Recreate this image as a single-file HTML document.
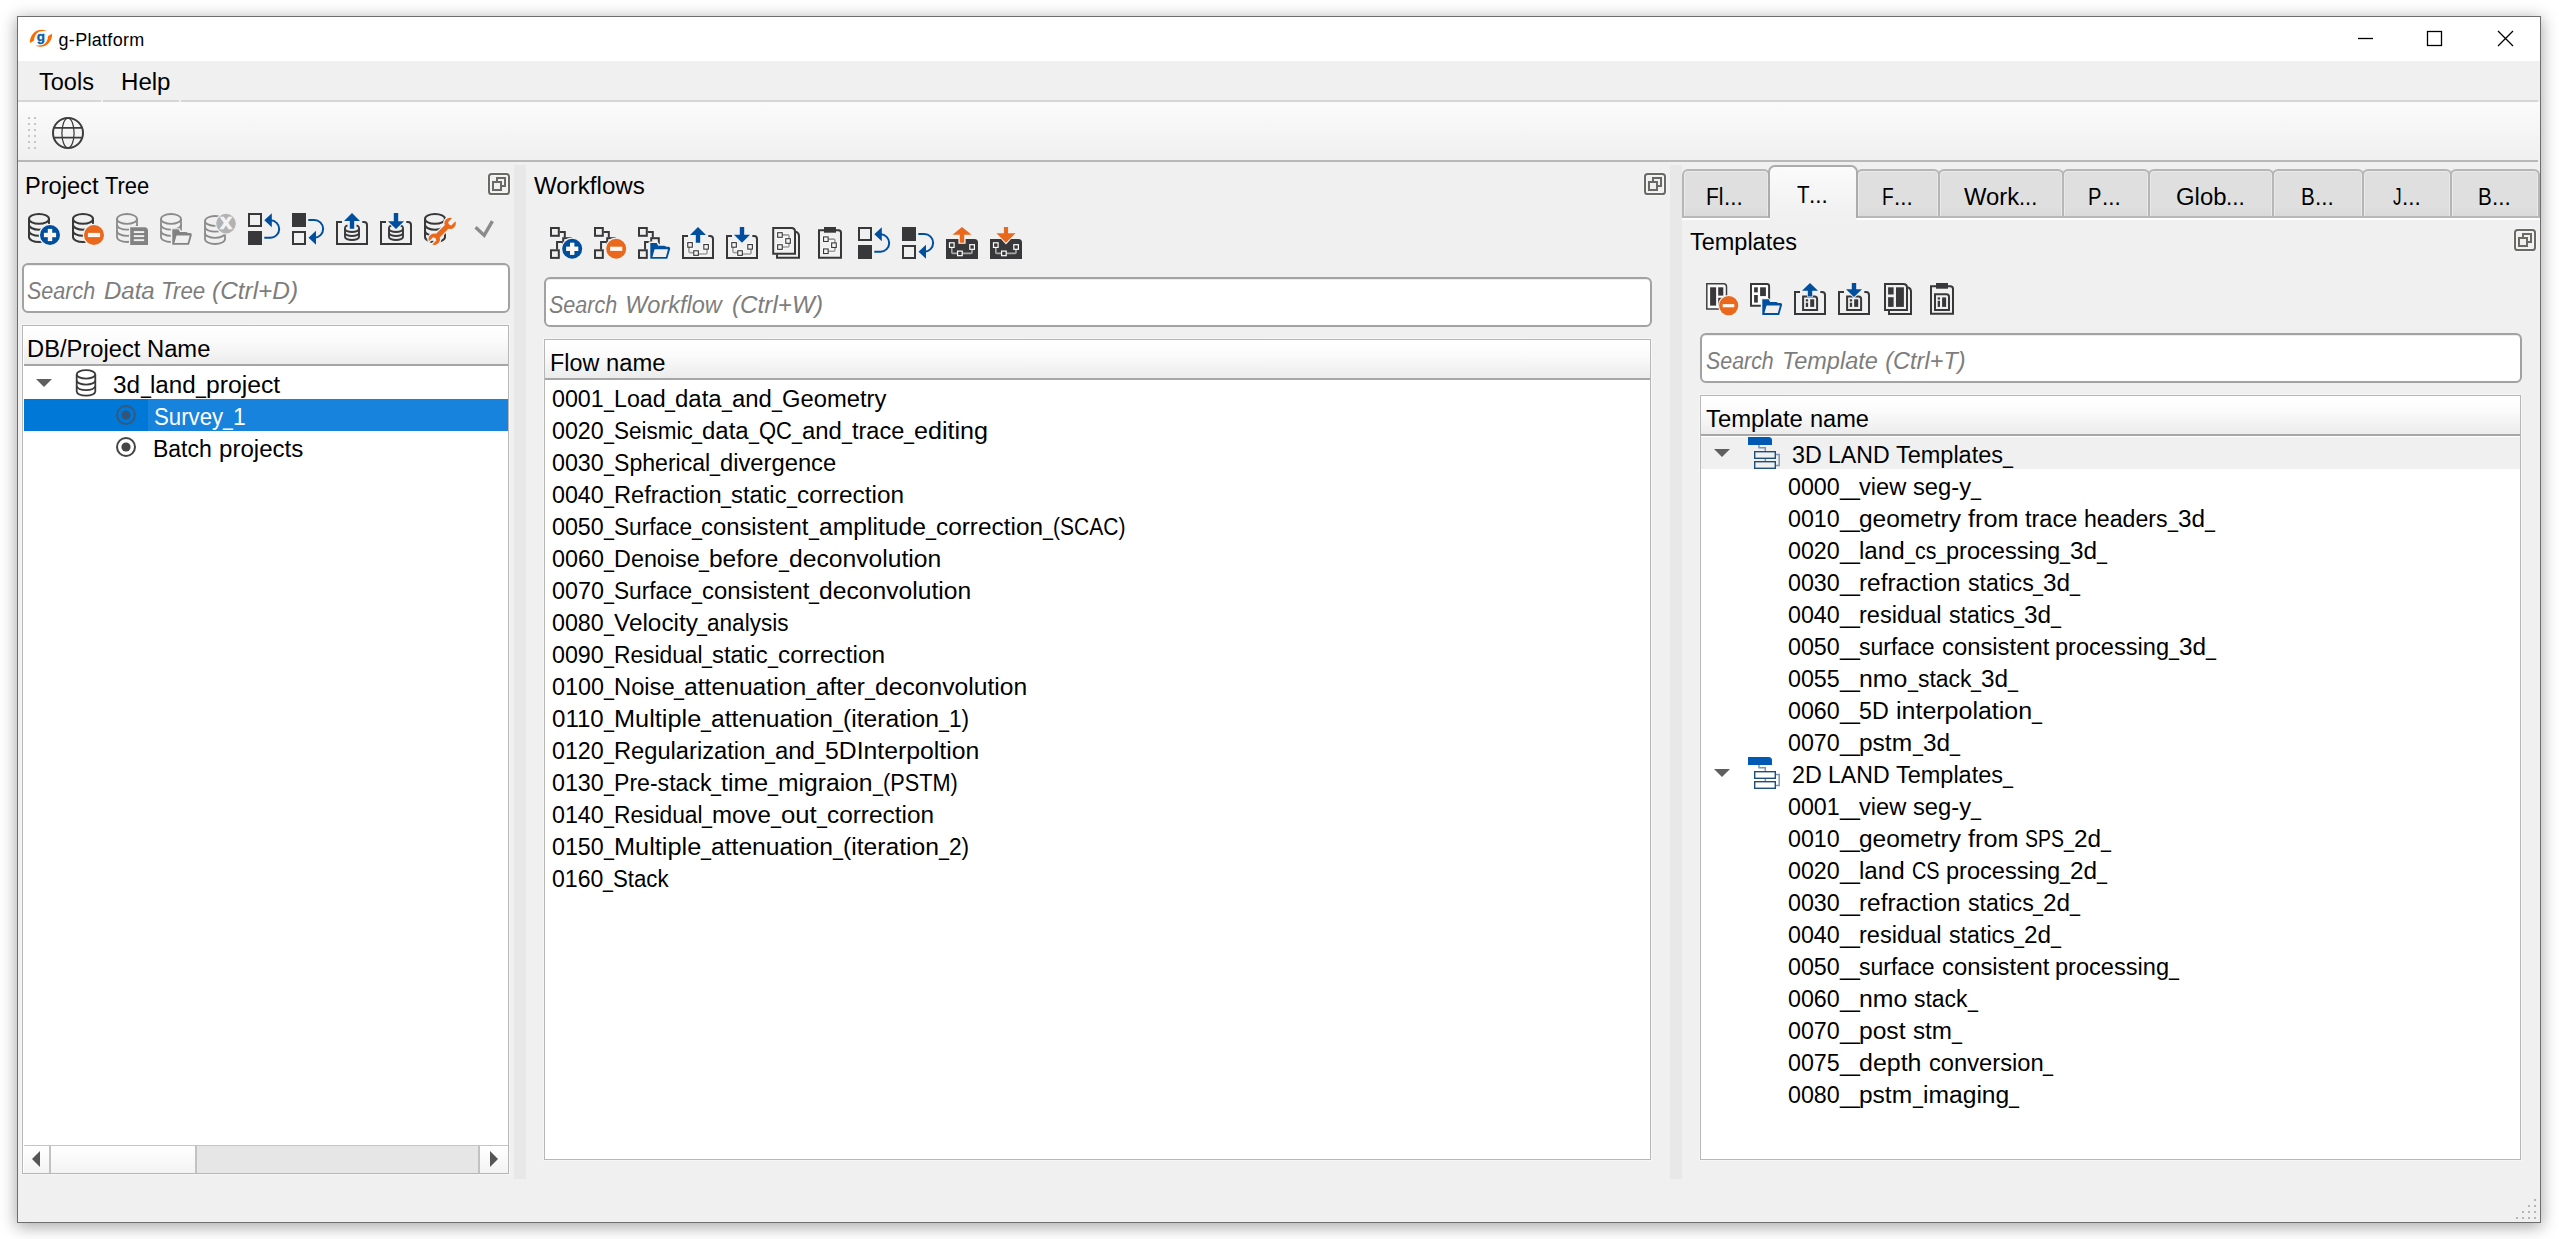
<!DOCTYPE html>
<html><head><meta charset="utf-8"><title>g-Platform</title>
<style>
html,body{margin:0;padding:0;background:#fff;}
body{width:2559px;height:1239px;position:relative;overflow:hidden;font-family:"Liberation Sans",sans-serif;}
div{position:absolute;box-sizing:border-box;}
svg.ic{position:absolute;overflow:visible;}
.t{font:23.5px/32px "Liberation Sans",sans-serif;letter-spacing:-0.2px;white-space:pre;color:#000;}
.t span,.ph span{position:absolute;top:0;transform-origin:0 0;letter-spacing:0;}
.ph{font:italic 23.5px/32px "Liberation Sans",sans-serif;letter-spacing:-0.1px;white-space:pre;color:#7d7d7d;}
.ttl{font:18px/32px "Liberation Sans",sans-serif;letter-spacing:0.15px;white-space:pre;color:#000;}
.search{background:#fff;border:2px solid #a2a2a2;border-radius:6px;box-shadow:inset 0 1px 0 #ededed;}
.view{background:#fff;border:1px solid #b7b7b7;box-shadow:0 0 0 1px #f6f6f6;}
.hdr{background:linear-gradient(#ffffff,#fbfbfb 40%,#ececec);}
.hline{background:#a6a6a6;}
.tab{background:linear-gradient(#dfdfdf,#dfdfdf 80%,#d9d9d9);border:2px solid #b6b6b6;border-bottom:none;border-radius:6px 6px 0 0;box-shadow:inset 1px 1px 0 #e9e9e9,inset -1px 0 0 #e9e9e9;}
</style></head>
<body>
<div style="left:17px;top:16px;width:2524px;height:1207px;background:#f0f0f0;border:1px solid #6e6e6e;box-shadow:0 3px 15px 1px rgba(0,0,0,0.34);"></div>
<div style="left:18px;top:17px;width:2522px;height:44px;background:#fff;"></div>
<svg class="ic" style="left:29px;top:28px" width="24" height="20" viewBox="0 0 24 20"><path d="M0.9 14.9C0.5 8 6 1.5 13 1.8C15 1.9 16.8 2.5 17.8 3.3C15 2.8 12 2.9 10 3.8C7 5.2 5.2 8.5 4.9 12.7Z" fill="#ff6a00"/><path d="M23.1 5.7C23.5 12.6 18 19.1 11 18.8C9 18.7 7.2 18.1 6.2 17.3C9 17.8 12 17.7 14 16.8C17 15.4 18.8 12.1 19.1 7.9Z" fill="#ff6a00"/><text x="11.8" y="12.5" text-anchor="middle" font-family="Liberation Sans,sans-serif" font-weight="bold" font-size="13.5" fill="#0a5ea8" stroke="#0a5ea8" stroke-width="0.35">g</text></svg>
<div class="ttl" style="left:58.56px;top:24.0px;letter-spacing:0.300px;">g-Platform</div>
<svg class="ic" style="left:2340px;top:17px" width="200" height="44" viewBox="0 0 200 44"><g stroke="#000" stroke-width="1.3" fill="none"><path d="M18 21.5H33"/><rect x="87.5" y="14.5" width="14" height="14"/><path d="M158 14L173 29M173 14L158 29"/></g></svg>
<div class="t" style="left:38.60px;top:66.0px;"><span style="left:0.00px;transform:scaleX(1.0011)">Tools</span></div>
<div class="t" style="left:121.24px;top:66.0px;"><span style="left:0.00px;transform:scaleX(1.0242)">Help</span></div>
<div style="left:18px;top:100px;width:2520px;height:2px;background:#d6d6d6;"></div>
<div style="left:101px;top:100px;width:2px;height:2px;background:#f0f0f0;"></div>
<div style="left:179px;top:100px;width:2px;height:2px;background:#f0f0f0;"></div>
<div style="left:18px;top:102px;width:2522px;height:58px;background:linear-gradient(#fbfbfb,#f0f0f0);"></div>
<div style="left:18px;top:160px;width:2520px;height:2px;background:#b8b8b8;"></div>
<div style="left:28px;top:117px;width:2px;height:2px;background:#c6c6c6;"></div>
<div style="left:34px;top:117px;width:2px;height:2px;background:#c6c6c6;"></div>
<div style="left:28px;top:123px;width:2px;height:2px;background:#c6c6c6;"></div>
<div style="left:34px;top:123px;width:2px;height:2px;background:#c6c6c6;"></div>
<div style="left:28px;top:129px;width:2px;height:2px;background:#c6c6c6;"></div>
<div style="left:34px;top:129px;width:2px;height:2px;background:#c6c6c6;"></div>
<div style="left:28px;top:135px;width:2px;height:2px;background:#c6c6c6;"></div>
<div style="left:34px;top:135px;width:2px;height:2px;background:#c6c6c6;"></div>
<div style="left:28px;top:141px;width:2px;height:2px;background:#c6c6c6;"></div>
<div style="left:34px;top:141px;width:2px;height:2px;background:#c6c6c6;"></div>
<div style="left:28px;top:147px;width:2px;height:2px;background:#c6c6c6;"></div>
<div style="left:34px;top:147px;width:2px;height:2px;background:#c6c6c6;"></div>
<svg class="ic" style="left:52px;top:117px" width="32" height="32" viewBox="0 0 32 32"><g fill="none" stroke="#3d3d3d"><circle cx="16" cy="16" r="15" stroke-width="2"/><ellipse cx="16" cy="16" rx="6.1" ry="15" stroke-width="1.25"/><path d="M2.2 10.8H29.8M2.2 20.7H29.8" stroke-width="1.8"/></g></svg>
<div style="left:514px;top:165px;width:12px;height:1014px;background:#e8e8e8;"></div>
<div style="left:1670px;top:165px;width:12px;height:1014px;background:#e8e8e8;"></div>
<div class="t" aria-label="Project Tree" style="left:25.24px;top:170.0px;"><span style="left:0.00px;transform:scaleX(1.0040)">Project </span><span style="left:80.00px;transform:scaleX(0.9327)">Tree</span></div>
<svg class="ic" style="left:488px;top:173px" width="22" height="22" viewBox="0 0 22 22"><rect x="1" y="1" width="20" height="20" rx="2.4" fill="none" stroke="#f8f8f8" stroke-width="3.6"/><rect x="1" y="1" width="20" height="20" rx="2.6" fill="none" stroke="#6b6963" stroke-width="2"/><g fill="#6b6963" shape-rendering="crispEdges"><rect x="8" y="4" width="10" height="2"/><rect x="16" y="4" width="2" height="10"/><rect x="8" y="4" width="2" height="4"/><rect x="14" y="12" width="4" height="2"/><rect x="4" y="8" width="10" height="2"/><rect x="4" y="16" width="10" height="2"/><rect x="4" y="8" width="2" height="10"/><rect x="12" y="8" width="2" height="10"/></g></svg>
<svg class="ic" style="left:28px;top:213px" width="32" height="32" viewBox="0 0 32 32"><g fill="none" stroke="#38383a" stroke-width="2"><ellipse cx="11" cy="5.9" rx="10" ry="4.9"/><path d="M1 5.9V24.1A10 4.9 0 0 0 21 24.1V5.9"/><path d="M1 11.8A10 4.9 0 0 0 21 11.8M1 17.9A10 4.9 0 0 0 21 17.9"/></g><circle cx="22" cy="22" r="11.2" fill="#f0f0f0"/><circle cx="22" cy="22" r="10" fill="#004e9e"/><rect x="15.9" y="19.8" width="12.2" height="4.4" fill="#fdf7f1"/><rect x="19.8" y="15.9" width="4.4" height="12.2" fill="#fdf7f1"/></svg>
<svg class="ic" style="left:72px;top:213px" width="32" height="32" viewBox="0 0 32 32"><g fill="none" stroke="#38383a" stroke-width="2"><ellipse cx="11" cy="5.9" rx="10" ry="4.9"/><path d="M1 5.9V24.1A10 4.9 0 0 0 21 24.1V5.9"/><path d="M1 11.8A10 4.9 0 0 0 21 11.8M1 17.9A10 4.9 0 0 0 21 17.9"/></g><circle cx="22" cy="22" r="11.2" fill="#f0f0f0"/><circle cx="22" cy="22" r="10" fill="#e9681c"/><rect x="15.9" y="19.9" width="12.2" height="4.2" fill="#fdf7f1"/></svg>
<svg class="ic" style="left:116px;top:213px" width="32" height="32" viewBox="0 0 32 32"><g fill="none" stroke="#8b8b8b" stroke-width="1.8"><ellipse cx="11" cy="5.9" rx="10" ry="4.9"/><path d="M1 5.9V24.1A10 4.9 0 0 0 21 24.1V5.9"/><path d="M1 11.8A10 4.9 0 0 0 21 11.8M1 17.9A10 4.9 0 0 0 21 17.9"/></g><rect x="13" y="13" width="20" height="20" fill="#f0f0f0"/><path d="M14.2 14.3H28.5Q32 14.3 32 18V32H14.2Z" fill="#828282"/><g fill="#f0f0f0"><rect x="17.8" y="18.1" width="10.4" height="1.9"/><rect x="17.8" y="22.15" width="10.4" height="1.9"/><rect x="17.8" y="26.2" width="10.4" height="1.9"/></g></svg>
<svg class="ic" style="left:160px;top:213px" width="32" height="32" viewBox="0 0 32 32"><g fill="none" stroke="#8b8b8b" stroke-width="1.8"><ellipse cx="11" cy="5.9" rx="10" ry="4.9"/><path d="M1 5.9V24.1A10 4.9 0 0 0 21 24.1V5.9"/><path d="M1 11.8A10 4.9 0 0 0 21 11.8M1 17.9A10 4.9 0 0 0 21 17.9"/></g><path d="M10.8 33V15.2H19L21 17.5H30V20H33V33Z" fill="#f0f0f0"/><path d="M12.3 31.8V16.3H18.6L20.0 18.9H25.7Q27.5 18.9 27.7 19.9H30.3Q32.3 20.1 31.7 22.5L29.0 31.8Z" fill="#828282"/><path d="M16.5 22.4H29.7L27.7 30.0H14.4Z" fill="#f0f0f0"/></svg>
<svg class="ic" style="left:204px;top:213px" width="32" height="32" viewBox="0 0 32 32"><g fill="none" stroke="#8b8b8b" stroke-width="1.8"><ellipse cx="11" cy="7.9" rx="10" ry="4.9"/><path d="M1 7.9V26.1A10 4.9 0 0 0 21 26.1V7.9"/><path d="M1 13.8A10 4.9 0 0 0 21 13.8M1 19.9A10 4.9 0 0 0 21 19.9"/></g><circle cx="22" cy="10.6" r="10.9" fill="#f0f0f0"/><circle cx="22" cy="10.6" r="9.8" fill="#b2b2b2"/><text x="22" y="16.4" text-anchor="middle" font-family="Liberation Sans,sans-serif" font-weight="bold" font-size="22.5" fill="#f4f4f4" stroke="#f4f4f4" stroke-width="0.5">x</text></svg>
<svg class="ic" style="left:248px;top:213px" width="32" height="32" viewBox="0 0 32 32"><rect x="1" y="1" width="12" height="12" fill="none" stroke="#38383a" stroke-width="2"/><rect x="0" y="18" width="14" height="14" fill="#38383a"/><path d="M16.3 24.7H22.5A8.7 8.7 0 0 0 22.5 7.3" fill="none" stroke="#004e9e" stroke-width="2"/><path d="M16.3 7.3L23.8 0.3V14.3Z" fill="#004e9e"/></svg>
<svg class="ic" style="left:292px;top:213px" width="32" height="32" viewBox="0 0 32 32"><rect x="0" y="0" width="14" height="14" fill="#38383a"/><rect x="1" y="19" width="12" height="12" fill="none" stroke="#38383a" stroke-width="2"/><path d="M16.3 7H22.3A8.85 8.85 0 0 1 22.3 24.7" fill="none" stroke="#004e9e" stroke-width="2"/><path d="M16.5 24.7L24 17.7V31.7Z" fill="#004e9e"/></svg>
<svg class="ic" style="left:336px;top:213px" width="32" height="32" viewBox="0 0 32 32"><path d="M6 9H1V31H31V12Q31 9 28 9H26.3" fill="none" stroke="#38383a" stroke-width="2"/><g fill="none" stroke="#38383a" stroke-width="1.9"><path d="M9 14.2V24A7 3 0 0 0 23 24V14.2"/><path d="M9 16A7 3 0 0 0 23 16M9 20A7 3 0 0 0 23 20"/><path d="M9 14.6A7 3 0 0 1 11.5 12.4M23 14.6A7 3 0 0 0 20.5 12.4"/></g><rect x="12.6" y="9" width="6.8" height="8" fill="#f0f0f0"/><path d="M16 0L24 7.9H18.2V15.7H13.8V7.9H8Z" fill="#004e9e"/></svg>
<svg class="ic" style="left:380px;top:213px" width="32" height="32" viewBox="0 0 32 32"><path d="M6 9H1V31H31V12Q31 9 28 9H26.3" fill="none" stroke="#38383a" stroke-width="2"/><g fill="none" stroke="#38383a" stroke-width="1.9"><path d="M9 14.2V24A7 3 0 0 0 23 24V14.2"/><path d="M9 16A7 3 0 0 0 23 16M9 20A7 3 0 0 0 23 20"/><path d="M9 14.6A7 3 0 0 1 11.5 12.4M23 14.6A7 3 0 0 0 20.5 12.4"/></g><path d="M7 8.5H25L16 17.5Z" fill="#f0f0f0"/><path d="M13.8 0H18.2V8.3H24L16 15.9L8 8.3H13.8Z" fill="#004e9e"/></svg>
<svg class="ic" style="left:424px;top:213px" width="32" height="32" viewBox="0 0 32 32"><g fill="none" stroke="#38383a" stroke-width="2"><ellipse cx="11" cy="5.9" rx="10" ry="4.9"/><path d="M1 5.9V24.1A10 4.9 0 0 0 21 24.1V5.9"/><path d="M1 11.8A10 4.9 0 0 0 21 11.8M1 17.9A10 4.9 0 0 0 21 17.9"/></g><g transform="translate(18.2 18.3) rotate(-45)"><path d="M-6.13 -2.6H6.13A5.7 5.7 0 0 1 16.4 -2.3L10.6 -2.3L9.6 0L10.6 2.3L16.4 2.3A5.7 5.7 0 0 1 6.13 2.6H-6.13A5.7 5.7 0 0 1 -16.4 2.3L-10.6 2.3L-9.6 0L-10.6 -2.3L-16.4 -2.3A5.7 5.7 0 0 1 -6.13 -2.6Z" fill="#f0f0f0" stroke="#f0f0f0" stroke-width="2.6" stroke-linejoin="round"/><path d="M-6.13 -2.6H6.13A5.7 5.7 0 0 1 16.4 -2.3L10.6 -2.3L9.6 0L10.6 2.3L16.4 2.3A5.7 5.7 0 0 1 6.13 2.6H-6.13A5.7 5.7 0 0 1 -16.4 2.3L-10.6 2.3L-9.6 0L-10.6 -2.3L-16.4 -2.3A5.7 5.7 0 0 1 -6.13 -2.6Z" fill="#e9681c"/></g></svg>
<svg class="ic" style="left:468px;top:213px" width="32" height="32" viewBox="0 0 32 32"><path d="M7.6 14.2L16.2 22.4L24.4 8.2" fill="none" stroke="#8b8b8b" stroke-width="3.4"/></svg>
<div class="search" style="left:22px;top:263px;width:488px;height:50px;"></div>
<div class="ph" aria-label="Search Data Tree (Ctrl+D)" style="left:28px;top:275.0px;"><span style="left:-0.55px;transform:scaleX(0.9157)">Search </span><span style="left:76.02px;transform:scaleX(1.0203)">Data </span><span style="left:133.41px;transform:scaleX(0.9486)">Tree </span><span style="left:184.45px;transform:scaleX(1.0390)">(Ctrl+D)</span></div>
<div class="view" style="left:22px;top:325px;width:487px;height:849px;"></div>
<div class="hdr" style="left:24px;top:326px;width:484px;height:38px;"></div>
<div class="hline" style="left:24px;top:364px;width:484px;height:2px;"></div>
<div class="t" aria-label="DB/Project Name" style="left:27.08px;top:333.0px;"><span style="left:0.00px;transform:scaleX(1.0094)">DB/Project </span><span style="left:119.95px;transform:scaleX(1.0106)">Name</span></div>
<svg class="ic" style="left:36px;top:379px" width="16" height="8"><path d="M0 0H16L8 8Z" fill="#5f5f5f"/></svg>
<svg class="ic" style="left:74px;top:367px" width="24" height="32" viewBox="0 0 24 32"><g fill="none" stroke="#3a3a3a" stroke-width="1.8"><ellipse cx="12" cy="7.4" rx="9.3" ry="4.2"/><path d="M2.7 7.4V24.5A9.3 4.2 0 0 0 21.3 24.5V7.4"/><path d="M2.7 13.4A9.3 4.2 0 0 0 21.3 13.4M2.7 19A9.3 4.2 0 0 0 21.3 19"/></g></svg>
<div class="t" aria-label="3d_land_project" style="left:113.48px;top:369.0px;"><span style="left:0.00px;transform:scaleX(1.0347)">3d</span><span style="left:27.05px;transform:scaleX(0.7616)">_</span><span style="left:37.01px;transform:scaleX(1.0282)">land</span><span style="left:82.70px;transform:scaleX(0.7616)">_</span><span style="left:92.66px;transform:scaleX(1.0503)">project</span></div>
<div style="left:24px;top:399px;width:484px;height:32px;background:#0078d7;"></div>
<div style="left:148px;top:399px;width:360px;height:32px;background:#1883dc;"></div>
<svg class="ic" style="left:114px;top:403px" width="24" height="24" viewBox="0 0 24 24"><circle cx="12" cy="12" r="9" fill="none" stroke="#36587c" stroke-width="2"/><circle cx="12" cy="12" r="4.6" fill="#34557a"/></svg>
<div class="t" aria-label="Survey_1" style="left:153.79px;top:401.0px;color:#fff;"><span style="left:0.00px;transform:scaleX(0.9453)">Survey</span><span style="left:69.14px;transform:scaleX(0.7496)">_</span><span style="left:78.95px;transform:scaleX(0.9736)">1</span></div>
<svg class="ic" style="left:114px;top:435px" width="24" height="24" viewBox="0 0 24 24"><circle cx="12" cy="12" r="9" fill="#fff" stroke="#454545" stroke-width="2"/><circle cx="12" cy="12" r="4.6" fill="#454545"/></svg>
<div class="t" aria-label="Batch projects" style="left:153.24px;top:433.0px;"><span style="left:0.00px;transform:scaleX(0.9776)">Batch </span><span style="left:65.32px;transform:scaleX(1.0241)">projects</span></div>
<div style="left:24px;top:1145px;width:484px;height:1px;background:#c4c4c4;"></div>
<div style="left:24px;top:1146px;width:484px;height:27px;background:#e6e6e6;"></div>
<div style="left:24px;top:1146px;width:25px;height:27px;background:linear-gradient(#fff,#f3f3f3);"></div>
<div style="left:49px;top:1146px;width:2px;height:27px;background:#c2c2c2;"></div>
<div style="left:51px;top:1146px;width:144px;height:27px;background:linear-gradient(#fff,#f3f3f3);"></div>
<div style="left:195px;top:1146px;width:2px;height:27px;background:#c2c2c2;"></div>
<div style="left:478px;top:1146px;width:2px;height:27px;background:#c2c2c2;"></div>
<div style="left:480px;top:1146px;width:28px;height:27px;background:linear-gradient(#fff,#f3f3f3);"></div>
<svg class="ic" style="left:32px;top:1151px" width="8" height="16"><path d="M8 0V16L0 8Z" fill="#555"/></svg>
<svg class="ic" style="left:490px;top:1151px" width="8" height="16"><path d="M0 0V16L8 8Z" fill="#555"/></svg>
<div class="t" style="left:533.84px;top:170.0px;"><span style="left:0.00px;transform:scaleX(1.0261)">Workflows</span></div>
<svg class="ic" style="left:1644px;top:173px" width="22" height="22" viewBox="0 0 22 22"><rect x="1" y="1" width="20" height="20" rx="2.4" fill="none" stroke="#f8f8f8" stroke-width="3.6"/><rect x="1" y="1" width="20" height="20" rx="2.6" fill="none" stroke="#6b6963" stroke-width="2"/><g fill="#6b6963" shape-rendering="crispEdges"><rect x="8" y="4" width="10" height="2"/><rect x="16" y="4" width="2" height="10"/><rect x="8" y="4" width="2" height="4"/><rect x="14" y="12" width="4" height="2"/><rect x="4" y="8" width="10" height="2"/><rect x="4" y="16" width="10" height="2"/><rect x="4" y="8" width="2" height="10"/><rect x="12" y="8" width="2" height="10"/></g></svg>
<svg class="ic" style="left:550px;top:227px" width="32" height="32" viewBox="0 0 32 32"><g fill="none" stroke="#38383a" stroke-width="2"><rect x="1" y="1" width="7.8" height="7.8"/><rect x="1" y="23.3" width="7.8" height="7.6"/><rect x="13.2" y="11.2" width="7.6" height="8"/><path d="M9.8 5H14.8V10.4M12.4 14.9H7.05V22.6"/></g><circle cx="22.2" cy="21.8" r="11.2" fill="#f0f0f0"/><circle cx="22.2" cy="21.8" r="10" fill="#004e9e"/><rect x="16.1" y="19.6" width="12.2" height="4.4" fill="#fdf7f1"/><rect x="20.0" y="15.700000000000001" width="4.4" height="12.2" fill="#fdf7f1"/></svg>
<svg class="ic" style="left:594px;top:227px" width="32" height="32" viewBox="0 0 32 32"><g fill="none" stroke="#38383a" stroke-width="2"><rect x="1" y="1" width="7.8" height="7.8"/><rect x="1" y="23.3" width="7.8" height="7.6"/><rect x="13.2" y="11.2" width="7.6" height="8"/><path d="M9.8 5H14.8V10.4M12.4 14.9H7.05V22.6"/></g><circle cx="22.2" cy="21.8" r="11.2" fill="#f0f0f0"/><circle cx="22.2" cy="21.8" r="10" fill="#e9681c"/><rect x="16.1" y="19.7" width="12.2" height="4.2" fill="#fdf7f1"/></svg>
<svg class="ic" style="left:638px;top:227px" width="32" height="32" viewBox="0 0 32 32"><g fill="none" stroke="#38383a" stroke-width="2"><rect x="1" y="1" width="7.8" height="7.8"/><rect x="1" y="23.3" width="7.8" height="7.6"/><rect x="13.2" y="11.2" width="7.6" height="8"/><path d="M9.8 5H14.8V10.4M12.4 14.9H7.05V22.6"/></g><path d="M10.6 33V14.4H19.6L21.2 17.2H28.5L29.5 18.4H33.5V33Z" fill="#f0f0f0"/><path d="M12.3 31.8V16.1H18.7L20.12 18.73H25.91Q27.73 18.73 27.94 19.75H30.58Q32.61 19.95 32.0 22.38L29.26 31.8Z" fill="#004e9e"/><path d="M16.56 22.28H29.97L27.94 29.98H14.43Z" fill="#f0f0f0"/></svg>
<svg class="ic" style="left:682px;top:227px" width="32" height="32" viewBox="0 0 32 32"><path d="M6 9H1V31H31V12Q31 9 28 9H26.3" fill="none" stroke="#38383a" stroke-width="2"/><rect x="5.75" y="15.60" width="4.60" height="4.60" fill="none" stroke="#fbfbfb" stroke-width="2.9000000000000004"/><rect x="21.80" y="17.55" width="4.60" height="4.60" fill="none" stroke="#fbfbfb" stroke-width="2.9000000000000004"/><rect x="11.75" y="23.75" width="4.60" height="4.60" fill="none" stroke="#fbfbfb" stroke-width="2.9000000000000004"/><path d="M6.9 20V24.6Q6.9 25.6 7.9 25.6H11.5M16.5 27H24Q25 27 25 26V22.5" fill="none" stroke="#f8f8f8" stroke-width="3.2" stroke-linejoin="round"/><path d="M6.9 20V24.6Q6.9 25.6 7.9 25.6H11.5M16.5 27H24Q25 27 25 26V22.5" fill="none" stroke="#9c9c9c" stroke-width="1.6" stroke-linejoin="round"/><rect x="5.75" y="15.60" width="4.60" height="4.60" fill="#f6f6f6" stroke="#38383a" stroke-width="1.1"/><rect x="21.80" y="17.55" width="4.60" height="4.60" fill="#f6f6f6" stroke="#38383a" stroke-width="1.1"/><rect x="11.75" y="23.75" width="4.60" height="4.60" fill="#f6f6f6" stroke="#38383a" stroke-width="1.1"/><path d="M16 0L24 7.9H18.2V15.7H13.8V7.9H8Z" fill="#004e9e"/></svg>
<svg class="ic" style="left:726px;top:227px" width="32" height="32" viewBox="0 0 32 32"><path d="M6 9H1V31H31V12Q31 9 28 9H26.3" fill="none" stroke="#38383a" stroke-width="2"/><rect x="5.75" y="15.60" width="4.60" height="4.60" fill="none" stroke="#fbfbfb" stroke-width="2.9000000000000004"/><rect x="21.80" y="17.55" width="4.60" height="4.60" fill="none" stroke="#fbfbfb" stroke-width="2.9000000000000004"/><rect x="11.75" y="23.75" width="4.60" height="4.60" fill="none" stroke="#fbfbfb" stroke-width="2.9000000000000004"/><path d="M6.9 20V24.6Q6.9 25.6 7.9 25.6H11.5M16.5 27H24Q25 27 25 26V22.5" fill="none" stroke="#f8f8f8" stroke-width="3.2" stroke-linejoin="round"/><path d="M6.9 20V24.6Q6.9 25.6 7.9 25.6H11.5M16.5 27H24Q25 27 25 26V22.5" fill="none" stroke="#9c9c9c" stroke-width="1.6" stroke-linejoin="round"/><rect x="5.75" y="15.60" width="4.60" height="4.60" fill="#f6f6f6" stroke="#38383a" stroke-width="1.1"/><rect x="21.80" y="17.55" width="4.60" height="4.60" fill="#f6f6f6" stroke="#38383a" stroke-width="1.1"/><rect x="11.75" y="23.75" width="4.60" height="4.60" fill="#f6f6f6" stroke="#38383a" stroke-width="1.1"/><path d="M13.8 0H18.2V7.8H24L16 15.7L8 7.8H13.8Z" fill="#004e9e"/></svg>
<svg class="ic" style="left:770px;top:227px" width="32" height="32" viewBox="0 0 32 32"><g fill="none" stroke="#38383a" stroke-width="2"><path d="M3.2 1H21.5Q25 1 25 4.5V26.8H3.2Z"/><path d="M25.6 4.6Q29 5.6 29 9V30.8H7V27.4"/></g><g transform="translate(0 0)"><rect x="7.65" y="5.70" width="4.60" height="4.60" fill="none" stroke="#fbfbfb" stroke-width="2.9000000000000004"/><rect x="15.75" y="11.70" width="4.60" height="4.60" fill="none" stroke="#fbfbfb" stroke-width="2.9000000000000004"/><rect x="7.65" y="17.75" width="4.60" height="4.60" fill="none" stroke="#fbfbfb" stroke-width="2.9000000000000004"/><path d="M12.5 7.9H18Q19 7.9 19 8.9V11.5M19 16.5V19Q19 20 18 20H12.5" fill="none" stroke="#f8f8f8" stroke-width="3.2" stroke-linejoin="round"/><path d="M12.5 7.9H18Q19 7.9 19 8.9V11.5M19 16.5V19Q19 20 18 20H12.5" fill="none" stroke="#9c9c9c" stroke-width="1.6" stroke-linejoin="round"/><rect x="7.65" y="5.70" width="4.60" height="4.60" fill="#f6f6f6" stroke="#38383a" stroke-width="1.1"/><rect x="15.75" y="11.70" width="4.60" height="4.60" fill="#f6f6f6" stroke="#38383a" stroke-width="1.1"/><rect x="7.65" y="17.75" width="4.60" height="4.60" fill="#f6f6f6" stroke="#38383a" stroke-width="1.1"/></g></svg>
<svg class="ic" style="left:814px;top:227px" width="32" height="32" viewBox="0 0 32 32"><path d="M10 3.3H5V30.8H27V5.8Q27 3.3 24.5 3.3H22" fill="none" stroke="#38383a" stroke-width="2"/><rect x="10" y="0" width="12" height="5.7" fill="#38383a"/><g transform="translate(1.9 4.2)"><rect x="7.65" y="5.70" width="4.60" height="4.60" fill="none" stroke="#fbfbfb" stroke-width="2.9000000000000004"/><rect x="15.75" y="11.70" width="4.60" height="4.60" fill="none" stroke="#fbfbfb" stroke-width="2.9000000000000004"/><rect x="7.65" y="17.75" width="4.60" height="4.60" fill="none" stroke="#fbfbfb" stroke-width="2.9000000000000004"/><path d="M12.5 7.9H18Q19 7.9 19 8.9V11.5M19 16.5V19Q19 20 18 20H12.5" fill="none" stroke="#f8f8f8" stroke-width="3.2" stroke-linejoin="round"/><path d="M12.5 7.9H18Q19 7.9 19 8.9V11.5M19 16.5V19Q19 20 18 20H12.5" fill="none" stroke="#9c9c9c" stroke-width="1.6" stroke-linejoin="round"/><rect x="7.65" y="5.70" width="4.60" height="4.60" fill="#f6f6f6" stroke="#38383a" stroke-width="1.1"/><rect x="15.75" y="11.70" width="4.60" height="4.60" fill="#f6f6f6" stroke="#38383a" stroke-width="1.1"/><rect x="7.65" y="17.75" width="4.60" height="4.60" fill="#f6f6f6" stroke="#38383a" stroke-width="1.1"/></g></svg>
<svg class="ic" style="left:858px;top:227px" width="32" height="32" viewBox="0 0 32 32"><rect x="1" y="1" width="12" height="12" fill="none" stroke="#38383a" stroke-width="2"/><rect x="0" y="18" width="14" height="14" fill="#38383a"/><path d="M16.3 24.7H22.5A8.7 8.7 0 0 0 22.5 7.3" fill="none" stroke="#004e9e" stroke-width="2"/><path d="M16.3 7.3L23.8 0.3V14.3Z" fill="#004e9e"/></svg>
<svg class="ic" style="left:902px;top:227px" width="32" height="32" viewBox="0 0 32 32"><rect x="0" y="0" width="14" height="14" fill="#38383a"/><rect x="1" y="19" width="12" height="12" fill="none" stroke="#38383a" stroke-width="2"/><path d="M16.3 7H22.3A8.85 8.85 0 0 1 22.3 24.7" fill="none" stroke="#004e9e" stroke-width="2"/><path d="M16.5 24.7L24 17.7V31.7Z" fill="#004e9e"/></svg>
<svg class="ic" style="left:946px;top:227px" width="32" height="32" viewBox="0 0 32 32"><path d="M0 12H28.5Q32 12 32 15.5V32H0Z" fill="#38383a"/><rect x="12.4" y="11" width="7.2" height="5.8" fill="#f0f0f0"/><path d="M5.8 20.5V25.4Q5.8 26.4 6.8 26.4H11.5M16.4 26.4H25Q26 26.4 26 25.4V22.6" fill="none" stroke="#a8a8a8" stroke-width="1.6" stroke-linejoin="round"/><rect x="3.50" y="15.80" width="4.60" height="4.60" fill="#38383a" stroke="#fff" stroke-width="1.2"/><rect x="23.80" y="17.70" width="4.60" height="4.60" fill="#38383a" stroke="#fff" stroke-width="1.2"/><rect x="11.60" y="24.10" width="4.60" height="4.60" fill="#38383a" stroke="#fff" stroke-width="1.2"/><path d="M16 0L25.6 7.8H18.25V15.7H13.75V7.8H6.4Z" fill="#e9681c"/></svg>
<svg class="ic" style="left:990px;top:227px" width="32" height="32" viewBox="0 0 32 32"><path d="M0 12H28.5Q32 12 32 15.5V32H0Z" fill="#38383a"/><path d="M4.5 5H27.5L16 17.6Z" fill="#f0f0f0"/><rect x="4.5" y="5" width="23" height="7" fill="#f0f0f0"/><path d="M5.8 20.5V25.4Q5.8 26.4 6.8 26.4H11.5M16.4 26.4H25Q26 26.4 26 25.4V22.6" fill="none" stroke="#a8a8a8" stroke-width="1.6" stroke-linejoin="round"/><rect x="3.50" y="15.80" width="4.60" height="4.60" fill="#38383a" stroke="#fff" stroke-width="1.2"/><rect x="23.80" y="17.70" width="4.60" height="4.60" fill="#38383a" stroke="#fff" stroke-width="1.2"/><rect x="11.60" y="24.10" width="4.60" height="4.60" fill="#38383a" stroke="#fff" stroke-width="1.2"/><path d="M13.9 0H18.1V6.2H25.6L16 15.7L6.4 6.2H13.9Z" fill="#e9681c"/></svg>
<div class="search" style="left:544px;top:277px;width:1108px;height:50px;"></div>
<div class="ph" aria-label="Search Workflow (Ctrl+W)" style="left:550px;top:289.0px;"><span style="left:-0.55px;transform:scaleX(0.9163)">Search </span><span style="left:75.14px;transform:scaleX(1.0000)">Workflow </span><span style="left:182.30px;transform:scaleX(1.0326)">(Ctrl+W)</span></div>
<div class="view" style="left:544px;top:339px;width:1107px;height:821px;"></div>
<div class="hdr" style="left:545px;top:340px;width:1105px;height:38px;"></div>
<div class="hline" style="left:545px;top:378px;width:1105px;height:2px;"></div>
<div class="t" aria-label="Flow name" style="left:549.88px;top:347.0px;"><span style="left:0.00px;transform:scaleX(0.9935)">Flow </span><span style="left:55.93px;transform:scaleX(1.0107)">name</span></div>
<div class="t" aria-label="0001_Load_data_and_Geometry" style="left:551.84px;top:383.0px;"><span style="left:0.00px;transform:scaleX(0.9898)">0001</span><span style="left:51.75px;transform:scaleX(0.7616)">_</span><span style="left:61.71px;transform:scaleX(0.9885)">Load</span><span style="left:113.39px;transform:scaleX(0.7616)">_</span><span style="left:123.35px;transform:scaleX(1.0200)">data</span><span style="left:170.02px;transform:scaleX(0.7616)">_</span><span style="left:179.98px;transform:scaleX(1.0168)">and</span><span style="left:219.86px;transform:scaleX(0.7616)">_</span><span style="left:229.82px;transform:scaleX(1.0110)">Geometry</span></div>
<div class="t" aria-label="0020_Seismic_data_QC_and_trace_editing" style="left:551.84px;top:415.0px;"><span style="left:0.00px;transform:scaleX(0.9898)">0020</span><span style="left:51.75px;transform:scaleX(0.7616)">_</span><span style="left:61.71px;transform:scaleX(0.9581)">Seismic</span><span style="left:140.53px;transform:scaleX(0.7616)">_</span><span style="left:150.49px;transform:scaleX(1.0200)">data</span><span style="left:197.16px;transform:scaleX(0.7616)">_</span><span style="left:207.12px;transform:scaleX(0.9348)">QC</span><span style="left:240.07px;transform:scaleX(0.7616)">_</span><span style="left:250.03px;transform:scaleX(1.0168)">and</span><span style="left:289.91px;transform:scaleX(0.7616)">_</span><span style="left:299.87px;transform:scaleX(1.0014)">trace</span><span style="left:352.20px;transform:scaleX(0.7616)">_</span><span style="left:362.16px;transform:scaleX(1.0698)">editing</span></div>
<div class="t" aria-label="0030_Spherical_divergence" style="left:551.84px;top:447.0px;"><span style="left:0.00px;transform:scaleX(0.9898)">0030</span><span style="left:51.75px;transform:scaleX(0.7616)">_</span><span style="left:61.71px;transform:scaleX(0.9820)">Spherical</span><span style="left:157.93px;transform:scaleX(0.7616)">_</span><span style="left:167.89px;transform:scaleX(1.0104)">divergence</span></div>
<div class="t" aria-label="0040_Refraction_static_correction" style="left:551.84px;top:479.0px;"><span style="left:0.00px;transform:scaleX(0.9898)">0040</span><span style="left:51.75px;transform:scaleX(0.7616)">_</span><span style="left:61.71px;transform:scaleX(1.0048)">Refraction</span><span style="left:169.34px;transform:scaleX(0.7616)">_</span><span style="left:179.30px;transform:scaleX(1.0127)">static</span><span style="left:234.86px;transform:scaleX(0.7616)">_</span><span style="left:244.82px;transform:scaleX(1.0373)">correction</span></div>
<div class="t" aria-label="0050_Surface_consistent_amplitude_correction_(SCAC)" style="left:551.84px;top:511.0px;"><span style="left:0.00px;transform:scaleX(0.9898)">0050</span><span style="left:51.75px;transform:scaleX(0.7616)">_</span><span style="left:61.71px;transform:scaleX(0.9630)">Surface</span><span style="left:139.71px;transform:scaleX(0.7616)">_</span><span style="left:149.67px;transform:scaleX(1.0137)">consistent</span><span style="left:256.93px;transform:scaleX(0.7616)">_</span><span style="left:266.89px;transform:scaleX(1.0493)">amplitude</span><span style="left:373.83px;transform:scaleX(0.7616)">_</span><span style="left:383.79px;transform:scaleX(1.0373)">correction</span><span style="left:490.83px;transform:scaleX(0.7616)">_</span><span style="left:500.79px;transform:scaleX(0.8946)">(SCAC)</span></div>
<div class="t" aria-label="0060_Denoise_before_deconvolution" style="left:551.84px;top:543.0px;"><span style="left:0.00px;transform:scaleX(0.9923)">0060</span><span style="left:51.88px;transform:scaleX(0.7635)">_</span><span style="left:61.86px;transform:scaleX(0.9945)">Denoise</span><span style="left:147.63px;transform:scaleX(0.7635)">_</span><span style="left:157.61px;transform:scaleX(1.0399)">before</span><span style="left:226.91px;transform:scaleX(0.7635)">_</span><span style="left:236.90px;transform:scaleX(1.0497)">deconvolution</span></div>
<div class="t" aria-label="0070_Surface_consistent_deconvolution" style="left:551.84px;top:575.0px;"><span style="left:0.00px;transform:scaleX(0.9917)">0070</span><span style="left:51.85px;transform:scaleX(0.7631)">_</span><span style="left:61.83px;transform:scaleX(0.9648)">Surface</span><span style="left:139.98px;transform:scaleX(0.7631)">_</span><span style="left:149.96px;transform:scaleX(1.0156)">consistent</span><span style="left:257.43px;transform:scaleX(0.7631)">_</span><span style="left:267.41px;transform:scaleX(1.0491)">deconvolution</span></div>
<div class="t" aria-label="0080_Velocity_analysis" style="left:551.84px;top:607.0px;"><span style="left:0.00px;transform:scaleX(0.9898)">0080</span><span style="left:51.75px;transform:scaleX(0.7616)">_</span><span style="left:61.71px;transform:scaleX(1.0362)">Velocity</span><span style="left:145.64px;transform:scaleX(0.7616)">_</span><span style="left:155.60px;transform:scaleX(0.9603)">analysis</span></div>
<div class="t" aria-label="0090_Residual_static_correction" style="left:551.84px;top:639.0px;"><span style="left:0.00px;transform:scaleX(0.9898)">0090</span><span style="left:51.75px;transform:scaleX(0.7616)">_</span><span style="left:61.71px;transform:scaleX(0.9687)">Residual</span><span style="left:150.30px;transform:scaleX(0.7616)">_</span><span style="left:160.27px;transform:scaleX(1.0127)">static</span><span style="left:215.82px;transform:scaleX(0.7616)">_</span><span style="left:225.79px;transform:scaleX(1.0373)">correction</span></div>
<div class="t" aria-label="0100_Noise_attenuation_after_deconvolution" style="left:551.84px;top:671.0px;"><span style="left:0.00px;transform:scaleX(0.9915)">0100</span><span style="left:51.84px;transform:scaleX(0.7629)">_</span><span style="left:61.82px;transform:scaleX(1.0095)">Noise</span><span style="left:122.48px;transform:scaleX(0.7629)">_</span><span style="left:132.46px;transform:scaleX(1.0501)">attenuation</span><span style="left:254.59px;transform:scaleX(0.7629)">_</span><span style="left:264.56px;transform:scaleX(1.0383)">after</span><span style="left:313.40px;transform:scaleX(0.7629)">_</span><span style="left:323.38px;transform:scaleX(1.0489)">deconvolution</span></div>
<div class="t" aria-label="0110_Multiple_attenuation_(iteration_1)" style="left:551.84px;top:703.0px;"><span style="left:0.00px;transform:scaleX(1.0238)">0110</span><span style="left:51.75px;transform:scaleX(0.7616)">_</span><span style="left:61.71px;transform:scaleX(1.0783)">Multiple</span><span style="left:149.04px;transform:scaleX(0.7616)">_</span><span style="left:159.00px;transform:scaleX(1.0484)">attenuation</span><span style="left:280.92px;transform:scaleX(0.7616)">_</span><span style="left:290.88px;transform:scaleX(1.0484)">(iteration</span><span style="left:386.74px;transform:scaleX(0.7616)">_</span><span style="left:396.70px;transform:scaleX(0.9652)">1)</span></div>
<div class="t" aria-label="0120_Regularization_and_5DInterpoltion" style="left:551.84px;top:735.0px;"><span style="left:0.00px;transform:scaleX(0.9898)">0120</span><span style="left:51.75px;transform:scaleX(0.7616)">_</span><span style="left:61.71px;transform:scaleX(1.0077)">Regularization</span><span style="left:213.11px;transform:scaleX(0.7616)">_</span><span style="left:223.07px;transform:scaleX(1.0168)">and</span><span style="left:262.95px;transform:scaleX(0.7616)">_</span><span style="left:272.91px;transform:scaleX(1.0544)">5DInterpoltion</span></div>
<div class="t" aria-label="0130_Pre-stack_time_migraion_(PSTM)" style="left:551.84px;top:767.0px;"><span style="left:0.00px;transform:scaleX(0.9898)">0130</span><span style="left:51.75px;transform:scaleX(0.7616)">_</span><span style="left:61.71px;transform:scaleX(0.9821)">Pre-stack</span><span style="left:159.19px;transform:scaleX(0.7616)">_</span><span style="left:169.15px;transform:scaleX(1.0614)">time</span><span style="left:216.28px;transform:scaleX(0.7616)">_</span><span style="left:226.24px;transform:scaleX(1.0491)">migraion</span><span style="left:320.79px;transform:scaleX(0.7616)">_</span><span style="left:330.75px;transform:scaleX(0.9239)">(PSTM)</span></div>
<div class="t" aria-label="0140_Residual_move_out_correction" style="left:551.84px;top:799.0px;"><span style="left:0.00px;transform:scaleX(0.9898)">0140</span><span style="left:51.75px;transform:scaleX(0.7616)">_</span><span style="left:61.71px;transform:scaleX(0.9687)">Residual</span><span style="left:150.30px;transform:scaleX(0.7616)">_</span><span style="left:160.27px;transform:scaleX(1.0222)">move</span><span style="left:219.01px;transform:scaleX(0.7616)">_</span><span style="left:228.97px;transform:scaleX(1.0943)">out</span><span style="left:264.73px;transform:scaleX(0.7616)">_</span><span style="left:274.69px;transform:scaleX(1.0373)">correction</span></div>
<div class="t" aria-label="0150_Multiple_attenuation_(iteration_2)" style="left:551.84px;top:831.0px;"><span style="left:0.00px;transform:scaleX(0.9898)">0150</span><span style="left:51.75px;transform:scaleX(0.7616)">_</span><span style="left:61.71px;transform:scaleX(1.0783)">Multiple</span><span style="left:149.04px;transform:scaleX(0.7616)">_</span><span style="left:159.00px;transform:scaleX(1.0484)">attenuation</span><span style="left:280.92px;transform:scaleX(0.7616)">_</span><span style="left:290.88px;transform:scaleX(1.0484)">(iteration</span><span style="left:386.74px;transform:scaleX(0.7616)">_</span><span style="left:396.70px;transform:scaleX(0.9652)">2)</span></div>
<div class="t" aria-label="0160_Stack" style="left:551.84px;top:863.0px;"><span style="left:0.00px;transform:scaleX(0.9810)">0160</span><span style="left:51.29px;transform:scaleX(0.7549)">_</span><span style="left:61.16px;transform:scaleX(0.9459)">Stack</span></div>
<div style="left:1682px;top:216px;width:858px;height:2px;background:#b7b7b7;"></div>
<div style="left:1682px;top:218px;width:858px;height:2px;background:#fdfdfd;"></div>
<div class="tab" style="left:1682px;top:169px;width:88px;height:47px;"></div>
<div class="t" aria-label="Fl..." style="left:1706.00px;top:180.5px;"><span style="left:0.00px;transform:scaleX(0.8949)">Fl</span><span style="left:17.52px;transform:scaleX(0.9563)">...</span></div>
<div class="tab" style="left:1856px;top:169px;width:84px;height:47px;"></div>
<div class="t" aria-label="F..." style="left:1881.92px;top:180.5px;"><span style="left:0.00px;transform:scaleX(0.8153)">F</span><span style="left:11.71px;transform:scaleX(0.9563)">...</span></div>
<div class="tab" style="left:1938px;top:169px;width:126px;height:47px;"></div>
<div class="t" aria-label="Work..." style="left:1964.16px;top:180.5px;"><span style="left:0.00px;transform:scaleX(1.0138)">Work</span><span style="left:55.16px;transform:scaleX(0.9295)">...</span></div>
<div class="tab" style="left:2062px;top:169px;width:88px;height:47px;"></div>
<div class="t" aria-label="P..." style="left:2088.48px;top:180.5px;"><span style="left:0.00px;transform:scaleX(0.8568)">P</span><span style="left:13.44px;transform:scaleX(0.9563)">...</span></div>
<div class="tab" style="left:2148px;top:169px;width:126px;height:47px;"></div>
<div class="t" aria-label="Glob..." style="left:2175.50px;top:180.5px;"><span style="left:0.00px;transform:scaleX(1.0163)">Glob</span><span style="left:50.45px;transform:scaleX(0.9563)">...</span></div>
<div class="tab" style="left:2272px;top:169px;width:92px;height:47px;"></div>
<div class="t" aria-label="B..." style="left:2300.92px;top:180.5px;"><span style="left:0.00px;transform:scaleX(0.8770)">B</span><span style="left:13.76px;transform:scaleX(0.9563)">...</span></div>
<div class="tab" style="left:2362px;top:169px;width:90px;height:47px;"></div>
<div class="t" aria-label="J..." style="left:2393.20px;top:180.5px;"><span style="left:0.00px;transform:scaleX(0.7291)">J</span><span style="left:8.57px;transform:scaleX(0.9563)">...</span></div>
<div class="tab" style="left:2450px;top:169px;width:90px;height:47px;"></div>
<div class="t" aria-label="B..." style="left:2478.34px;top:180.5px;"><span style="left:0.00px;transform:scaleX(0.8770)">B</span><span style="left:13.76px;transform:scaleX(0.9563)">...</span></div>
<div style="left:1768px;top:165px;width:90px;height:53px;background:linear-gradient(#fbfbfb,#f0f0f0);border:2px solid #ababab;border-bottom:none;border-radius:7px 7px 0 0;"></div>
<div style="left:1770px;top:218px;width:86px;height:2px;background:#f0f0f0;"></div>
<div class="t" aria-label="T..." style="left:1796.72px;top:178.6px;"><span style="left:0.00px;transform:scaleX(0.8757)">T</span><span style="left:12.57px;transform:scaleX(0.9563)">...</span></div>
<div class="t" style="left:1690.32px;top:226.0px;"><span style="left:0.00px;transform:scaleX(0.9990)">Templates</span></div>
<svg class="ic" style="left:2514px;top:229px" width="22" height="22" viewBox="0 0 22 22"><rect x="1" y="1" width="20" height="20" rx="2.4" fill="none" stroke="#f8f8f8" stroke-width="3.6"/><rect x="1" y="1" width="20" height="20" rx="2.6" fill="none" stroke="#6b6963" stroke-width="2"/><g fill="#6b6963" shape-rendering="crispEdges"><rect x="8" y="4" width="10" height="2"/><rect x="16" y="4" width="2" height="10"/><rect x="8" y="4" width="2" height="4"/><rect x="14" y="12" width="4" height="2"/><rect x="4" y="8" width="10" height="2"/><rect x="4" y="16" width="10" height="2"/><rect x="4" y="8" width="2" height="10"/><rect x="12" y="8" width="2" height="10"/></g></svg>
<svg class="ic" style="left:1706px;top:283px" width="32" height="32" viewBox="0 0 32 32"><path d="M0.8 0.8H17.6Q20.5 0.8 20.5 3.8V26H0.8Z" fill="#fafafa" stroke="#3f3f41" stroke-width="1.5"/><rect x="4.1" y="4.3" width="6" height="18.3" fill="#38383a"/><rect x="12.2" y="4.3" width="5.1" height="8.3" fill="#38383a"/><rect x="12.2" y="14.8" width="5.1" height="7.8" fill="#38383a"/><circle cx="22.7" cy="22.6" r="10.6" fill="#f0f0f0"/><circle cx="22.7" cy="22.6" r="9.6" fill="#e9681c"/><rect x="16.7" y="21.099999999999998" width="11.6" height="3.2" fill="#fdf7f1"/></svg>
<svg class="ic" style="left:1750px;top:283px" width="32" height="32" viewBox="0 0 32 32"><path d="M1 1H17Q19.1 1 19.1 3.2V22.7H1Z" fill="#fff" stroke="#38383a" stroke-width="2"/><rect x="4.1" y="4.3" width="3.7" height="5.1" fill="#38383a"/><rect x="4.1" y="12" width="3.7" height="7.6" fill="#38383a"/><rect x="10.1" y="4.3" width="5.8" height="8.8" fill="#38383a"/><path d="M10.8 33V15.2H19L21 17.5H30V20H33.5V33Z" fill="#f0f0f0"/><path d="M12.3 31.9V16.3H18.66L20.08 18.92H25.84Q27.66 18.92 27.86 19.92H30.48Q32.51 20.12 31.9 22.54L29.17 31.9Z" fill="#004e9e"/><path d="M16.54 22.44H29.88L27.86 30.09H14.42Z" fill="#f0f0f0"/></svg>
<svg class="ic" style="left:1794px;top:283px" width="32" height="32" viewBox="0 0 32 32"><path d="M6 9H1V31H31V12Q31 9 28 9H26.3" fill="none" stroke="#38383a" stroke-width="2"/><path d="M9.1 13.6H20.6Q23.1 13.6 23.1 16.1V26.9H9.1Z" fill="none" stroke="#38383a" stroke-width="2"/><rect x="11.8" y="16.3" width="2.3" height="2.1" fill="#38383a"/><rect x="11.8" y="19.7" width="2.3" height="4.1999999999999975" fill="#38383a"/><rect x="16.2" y="16.3" width="4" height="7.599999999999998" fill="#38383a"/><rect x="13.2" y="9" width="5.6" height="5.2" fill="#f0f0f0"/><path d="M16 0L24 7.8H18.2V13.6H13.8V7.8H8Z" fill="#004e9e"/></svg>
<svg class="ic" style="left:1838px;top:283px" width="32" height="32" viewBox="0 0 32 32"><path d="M6 9H1V31H31V12Q31 9 28 9H26.3" fill="none" stroke="#38383a" stroke-width="2"/><path d="M9.1 13.6H20.6Q23.1 13.6 23.1 16.1V26.9H9.1Z" fill="none" stroke="#38383a" stroke-width="2"/><rect x="11.8" y="16.3" width="2.3" height="2.1" fill="#38383a"/><rect x="11.8" y="19.7" width="2.3" height="4.1999999999999975" fill="#38383a"/><rect x="16.2" y="16.3" width="4" height="7.599999999999998" fill="#38383a"/><path d="M7 5H25V6L16 15.5L7 6Z" fill="#f0f0f0"/><path d="M13.8 0H18.2V6.2H24L16 13.9L8 6.2H13.8Z" fill="#004e9e"/></svg>
<svg class="ic" style="left:1882px;top:283px" width="32" height="32" viewBox="0 0 32 32"><g fill="none" stroke="#38383a" stroke-width="2"><path d="M3 1H21.4Q25 1 25 4.6V26.9H3Z"/><path d="M25.4 4.2Q29 5 29 8.6V30.9H7V27.4"/></g><rect x="6.1" y="4.3" width="5.5" height="7.2" fill="#38383a"/><rect x="6.1" y="14.2" width="5.5" height="9.7" fill="#38383a"/><rect x="14" y="4.3" width="7.9" height="19.6" fill="#38383a"/></svg>
<svg class="ic" style="left:1926px;top:283px" width="32" height="32" viewBox="0 0 32 32"><path d="M10 3.3H5V30.8H27V6Q27 3.3 24.3 3.3H22" fill="none" stroke="#38383a" stroke-width="2"/><rect x="10" y="0" width="12" height="5.7" fill="#38383a"/><path d="M9 11.2H20.5Q23 11.2 23 13.7V26.9H9Z" fill="none" stroke="#38383a" stroke-width="2"/><rect x="11.7" y="14.4" width="2.3" height="2.1" fill="#38383a"/><rect x="11.7" y="17.8" width="2.3" height="6.099999999999998" fill="#38383a"/><rect x="16.1" y="14.4" width="4" height="9.499999999999998" fill="#38383a"/></svg>
<div class="search" style="left:1700px;top:333px;width:822px;height:50px;"></div>
<div class="ph" aria-label="Search Template (Ctrl+T)" style="left:1706px;top:345.0px;"><span style="left:-0.04px;transform:scaleX(0.9093)">Search </span><span style="left:75.58px;transform:scaleX(1.0001)">Template </span><span style="left:179.30px;transform:scaleX(1.0000)">(Ctrl+T)</span></div>
<div class="view" style="left:1700px;top:395px;width:821px;height:765px;"></div>
<div class="hdr" style="left:1701px;top:396px;width:819px;height:38px;"></div>
<div class="hline" style="left:1701px;top:434px;width:819px;height:2px;"></div>
<div class="t" aria-label="Template name" style="left:1706.36px;top:403.0px;"><span style="left:0.00px;transform:scaleX(1.0153)">Template </span><span style="left:103.39px;transform:scaleX(1.0027)">name</span></div>
<div style="left:1701px;top:437px;width:819px;height:32px;background:#f0f0f0;"></div>
<svg class="ic" style="left:1714px;top:449px" width="16" height="8"><path d="M0 0H16L8 8Z" fill="#5f5f5f"/></svg>
<svg class="ic" style="left:1748px;top:437px" width="32" height="32" viewBox="0 0 32 32"><path d="M0 0H20.5Q24 0 24 3.5V8H0Z" fill="#0059b3"/><path d="M11 8V10.8H17.3V14M17.3 22V24M28 17.5H31.2V28.6H28" fill="none" stroke="#7d97b3" stroke-width="1.5"/><g fill="none" stroke="#1f4e79" stroke-width="1.4"><rect x="6.7" y="14.7" width="20.6" height="6.6"/><rect x="6.7" y="24.7" width="20.6" height="6.6"/></g></svg>
<div class="t" aria-label="3D LAND Templates_" style="left:1791.84px;top:439.0px;"><span style="left:0.00px;transform:scaleX(0.9906)">3D </span><span style="left:36.34px;transform:scaleX(0.9820)">LAND </span><span style="left:104.47px;transform:scaleX(0.9990)">Templates</span><span style="left:211.48px;transform:scaleX(0.7616)">_</span></div>
<div class="t" aria-label="0000__view seg-y_" style="left:1787.84px;top:471.0px;"><span style="left:0.00px;transform:scaleX(0.9898)">0000</span><span style="left:51.75px;transform:scaleX(0.7621)">__</span><span style="left:71.67px;transform:scaleX(1.0037)">view </span><span style="left:125.44px;transform:scaleX(1.0094)">seg-y</span><span style="left:183.45px;transform:scaleX(0.7616)">_</span></div>
<div class="t" aria-label="0010__geometry from trace headers_3d_" style="left:1787.84px;top:503.0px;"><span style="left:0.00px;transform:scaleX(0.9898)">0010</span><span style="left:51.75px;transform:scaleX(0.7621)">__</span><span style="left:71.67px;transform:scaleX(1.0407)">geometry </span><span style="left:180.20px;transform:scaleX(1.0756)">from </span><span style="left:237.33px;transform:scaleX(1.0014)">trace </span><span style="left:296.23px;transform:scaleX(0.9832)">headers</span><span style="left:379.73px;transform:scaleX(0.7616)">_</span><span style="left:389.70px;transform:scaleX(1.0347)">3d</span><span style="left:416.74px;transform:scaleX(0.7616)">_</span></div>
<div class="t" aria-label="0020__land_cs_processing_3d_" style="left:1787.84px;top:535.0px;"><span style="left:0.00px;transform:scaleX(0.9898)">0020</span><span style="left:51.75px;transform:scaleX(0.7621)">__</span><span style="left:71.67px;transform:scaleX(1.0282)">land</span><span style="left:117.36px;transform:scaleX(0.7616)">_</span><span style="left:127.32px;transform:scaleX(0.9051)">cs</span><span style="left:148.59px;transform:scaleX(0.7616)">_</span><span style="left:158.55px;transform:scaleX(1.0030)">processing</span><span style="left:272.55px;transform:scaleX(0.7616)">_</span><span style="left:282.52px;transform:scaleX(1.0347)">3d</span><span style="left:309.56px;transform:scaleX(0.7616)">_</span></div>
<div class="t" aria-label="0030__refraction statics_3d_" style="left:1787.84px;top:567.0px;"><span style="left:0.00px;transform:scaleX(0.9898)">0030</span><span style="left:51.75px;transform:scaleX(0.7621)">__</span><span style="left:71.67px;transform:scaleX(1.0372)">refraction </span><span style="left:179.86px;transform:scaleX(0.9870)">statics</span><span style="left:245.60px;transform:scaleX(0.7616)">_</span><span style="left:255.56px;transform:scaleX(1.0347)">3d</span><span style="left:282.61px;transform:scaleX(0.7616)">_</span></div>
<div class="t" aria-label="0040__residual statics_3d_" style="left:1787.84px;top:599.0px;"><span style="left:0.00px;transform:scaleX(0.9898)">0040</span><span style="left:51.75px;transform:scaleX(0.7621)">__</span><span style="left:71.67px;transform:scaleX(1.0035)">residual </span><span style="left:160.83px;transform:scaleX(0.9870)">statics</span><span style="left:226.57px;transform:scaleX(0.7616)">_</span><span style="left:236.53px;transform:scaleX(1.0347)">3d</span><span style="left:263.58px;transform:scaleX(0.7616)">_</span></div>
<div class="t" aria-label="0050__surface consistent processing_3d_" style="left:1787.84px;top:631.0px;"><span style="left:0.00px;transform:scaleX(0.9898)">0050</span><span style="left:51.75px;transform:scaleX(0.7621)">__</span><span style="left:71.67px;transform:scaleX(0.9788)">surface </span><span style="left:153.69px;transform:scaleX(1.0137)">consistent </span><span style="left:267.53px;transform:scaleX(1.0030)">processing</span><span style="left:381.53px;transform:scaleX(0.7616)">_</span><span style="left:391.49px;transform:scaleX(1.0347)">3d</span><span style="left:418.54px;transform:scaleX(0.7616)">_</span></div>
<div class="t" aria-label="0055__nmo_stack_3d_" style="left:1787.84px;top:663.0px;"><span style="left:0.00px;transform:scaleX(0.9898)">0055</span><span style="left:51.75px;transform:scaleX(0.7621)">__</span><span style="left:71.67px;transform:scaleX(1.0555)">nmo</span><span style="left:119.93px;transform:scaleX(0.7616)">_</span><span style="left:129.89px;transform:scaleX(0.9760)">stack</span><span style="left:183.43px;transform:scaleX(0.7616)">_</span><span style="left:193.39px;transform:scaleX(1.0347)">3d</span><span style="left:220.44px;transform:scaleX(0.7616)">_</span></div>
<div class="t" aria-label="0060__5D interpolation_" style="left:1787.84px;top:695.0px;"><span style="left:0.00px;transform:scaleX(0.9898)">0060</span><span style="left:51.75px;transform:scaleX(0.7621)">__</span><span style="left:71.67px;transform:scaleX(0.9906)">5D </span><span style="left:108.01px;transform:scaleX(1.0634)">interpolation</span><span style="left:244.17px;transform:scaleX(0.7616)">_</span></div>
<div class="t" aria-label="0070__pstm_3d_" style="left:1787.84px;top:727.0px;"><span style="left:0.00px;transform:scaleX(0.9898)">0070</span><span style="left:51.75px;transform:scaleX(0.7621)">__</span><span style="left:71.67px;transform:scaleX(1.0417)">pstm</span><span style="left:124.73px;transform:scaleX(0.7616)">_</span><span style="left:134.70px;transform:scaleX(1.0347)">3d</span><span style="left:161.74px;transform:scaleX(0.7616)">_</span></div>
<svg class="ic" style="left:1714px;top:769px" width="16" height="8"><path d="M0 0H16L8 8Z" fill="#5f5f5f"/></svg>
<svg class="ic" style="left:1748px;top:757px" width="32" height="32" viewBox="0 0 32 32"><path d="M0 0H20.5Q24 0 24 3.5V8H0Z" fill="#0059b3"/><path d="M11 8V10.8H17.3V14M17.3 22V24M28 17.5H31.2V28.6H28" fill="none" stroke="#7d97b3" stroke-width="1.5"/><g fill="none" stroke="#1f4e79" stroke-width="1.4"><rect x="6.7" y="14.7" width="20.6" height="6.6"/><rect x="6.7" y="24.7" width="20.6" height="6.6"/></g></svg>
<div class="t" aria-label="2D LAND Templates_" style="left:1791.84px;top:759.0px;"><span style="left:0.00px;transform:scaleX(0.9906)">2D </span><span style="left:36.34px;transform:scaleX(0.9820)">LAND </span><span style="left:104.47px;transform:scaleX(0.9990)">Templates</span><span style="left:211.48px;transform:scaleX(0.7616)">_</span></div>
<div class="t" aria-label="0001__view seg-y_" style="left:1787.84px;top:791.0px;"><span style="left:0.00px;transform:scaleX(0.9898)">0001</span><span style="left:51.75px;transform:scaleX(0.7621)">__</span><span style="left:71.67px;transform:scaleX(1.0037)">view </span><span style="left:125.44px;transform:scaleX(1.0094)">seg-y</span><span style="left:183.45px;transform:scaleX(0.7616)">_</span></div>
<div class="t" aria-label="0010__geometry from SPS_2d_" style="left:1787.84px;top:823.0px;"><span style="left:0.00px;transform:scaleX(0.9898)">0010</span><span style="left:51.75px;transform:scaleX(0.7621)">__</span><span style="left:71.67px;transform:scaleX(1.0407)">geometry </span><span style="left:180.20px;transform:scaleX(1.0756)">from </span><span style="left:237.33px;transform:scaleX(0.8275)">SPS</span><span style="left:276.25px;transform:scaleX(0.7616)">_</span><span style="left:286.21px;transform:scaleX(1.0347)">2d</span><span style="left:313.25px;transform:scaleX(0.7616)">_</span></div>
<div class="t" aria-label="0020__land CS processing_2d_" style="left:1787.84px;top:855.0px;"><span style="left:0.00px;transform:scaleX(0.9898)">0020</span><span style="left:51.75px;transform:scaleX(0.7621)">__</span><span style="left:71.67px;transform:scaleX(1.0282)">land </span><span style="left:123.94px;transform:scaleX(0.8451)">CS </span><span style="left:158.11px;transform:scaleX(1.0030)">processing</span><span style="left:272.11px;transform:scaleX(0.7616)">_</span><span style="left:282.07px;transform:scaleX(1.0347)">2d</span><span style="left:309.12px;transform:scaleX(0.7616)">_</span></div>
<div class="t" aria-label="0030__refraction statics_2d_" style="left:1787.84px;top:887.0px;"><span style="left:0.00px;transform:scaleX(0.9898)">0030</span><span style="left:51.75px;transform:scaleX(0.7621)">__</span><span style="left:71.67px;transform:scaleX(1.0372)">refraction </span><span style="left:179.86px;transform:scaleX(0.9870)">statics</span><span style="left:245.60px;transform:scaleX(0.7616)">_</span><span style="left:255.56px;transform:scaleX(1.0347)">2d</span><span style="left:282.61px;transform:scaleX(0.7616)">_</span></div>
<div class="t" aria-label="0040__residual statics_2d_" style="left:1787.84px;top:919.0px;"><span style="left:0.00px;transform:scaleX(0.9898)">0040</span><span style="left:51.75px;transform:scaleX(0.7621)">__</span><span style="left:71.67px;transform:scaleX(1.0035)">residual </span><span style="left:160.83px;transform:scaleX(0.9870)">statics</span><span style="left:226.57px;transform:scaleX(0.7616)">_</span><span style="left:236.53px;transform:scaleX(1.0347)">2d</span><span style="left:263.58px;transform:scaleX(0.7616)">_</span></div>
<div class="t" aria-label="0050__surface consistent processing_" style="left:1787.84px;top:951.0px;"><span style="left:0.00px;transform:scaleX(0.9898)">0050</span><span style="left:51.75px;transform:scaleX(0.7621)">__</span><span style="left:71.67px;transform:scaleX(0.9788)">surface </span><span style="left:153.69px;transform:scaleX(1.0137)">consistent </span><span style="left:267.53px;transform:scaleX(1.0030)">processing</span><span style="left:381.53px;transform:scaleX(0.7616)">_</span></div>
<div class="t" aria-label="0060__nmo stack_" style="left:1787.84px;top:983.0px;"><span style="left:0.00px;transform:scaleX(0.9898)">0060</span><span style="left:51.75px;transform:scaleX(0.7621)">__</span><span style="left:71.67px;transform:scaleX(1.0555)">nmo </span><span style="left:126.50px;transform:scaleX(0.9760)">stack</span><span style="left:180.05px;transform:scaleX(0.7616)">_</span></div>
<div class="t" aria-label="0070__post stm_" style="left:1787.84px;top:1015.0px;"><span style="left:0.00px;transform:scaleX(0.9898)">0070</span><span style="left:51.75px;transform:scaleX(0.7621)">__</span><span style="left:71.67px;transform:scaleX(1.0465)">post </span><span style="left:124.73px;transform:scaleX(1.0289)">stm</span><span style="left:163.69px;transform:scaleX(0.7616)">_</span></div>
<div class="t" aria-label="0075__depth conversion_" style="left:1787.84px;top:1047.0px;"><span style="left:0.00px;transform:scaleX(0.9898)">0075</span><span style="left:51.75px;transform:scaleX(0.7621)">__</span><span style="left:71.67px;transform:scaleX(1.0620)">depth </span><span style="left:140.71px;transform:scaleX(1.0093)">conversion</span><span style="left:255.42px;transform:scaleX(0.7616)">_</span></div>
<div class="t" aria-label="0080__pstm_imaging_" style="left:1787.84px;top:1079.0px;"><span style="left:0.00px;transform:scaleX(0.9898)">0080</span><span style="left:51.75px;transform:scaleX(0.7621)">__</span><span style="left:71.67px;transform:scaleX(1.0417)">pstm</span><span style="left:124.73px;transform:scaleX(0.7616)">_</span><span style="left:134.70px;transform:scaleX(1.0480)">imaging</span><span style="left:220.95px;transform:scaleX(0.7616)">_</span></div>
<div style="left:2534px;top:1199px;width:2px;height:2px;background:#b6b6b6;"></div>
<div style="left:2528px;top:1205px;width:2px;height:2px;background:#b6b6b6;"></div>
<div style="left:2534px;top:1205px;width:2px;height:2px;background:#b6b6b6;"></div>
<div style="left:2522px;top:1211px;width:2px;height:2px;background:#b6b6b6;"></div>
<div style="left:2528px;top:1211px;width:2px;height:2px;background:#b6b6b6;"></div>
<div style="left:2534px;top:1211px;width:2px;height:2px;background:#b6b6b6;"></div>
<div style="left:2516px;top:1217px;width:2px;height:2px;background:#b6b6b6;"></div>
<div style="left:2522px;top:1217px;width:2px;height:2px;background:#b6b6b6;"></div>
<div style="left:2528px;top:1217px;width:2px;height:2px;background:#b6b6b6;"></div>
<div style="left:2534px;top:1217px;width:2px;height:2px;background:#b6b6b6;"></div>
</body></html>
